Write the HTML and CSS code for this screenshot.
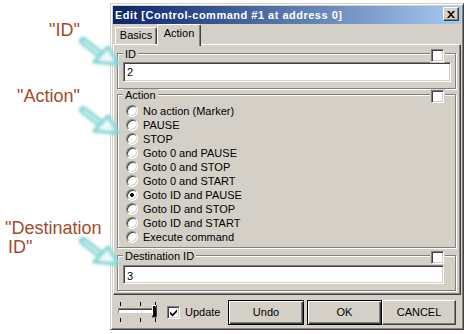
FILE: index.html
```html
<!DOCTYPE html>
<html lang="en">
<head>
  <meta charset="UTF-8">
  <meta name="viewport" content="width=device-width, initial-scale=1.0">
  <title>Edit [Control-command #1 at address 0]</title>
  <link rel="stylesheet" href="styles.css">
</head>
<body>
  <p class="note note-id">"ID"</p>
  <p class="note note-action">"Action"</p>
  <p class="note note-dest">"Destination<br><span class="indent">ID"</span></p>

  <div class="window">
    <div class="titlebar">
      <span class="title">Edit [Control-command #1 at address 0]</span>
      <button class="close" type="button" aria-label="Close">
        <svg width="8" height="7" viewBox="0 0 8 7"><path d="M0 0h2l2 2.3 2-2.3h2l-3 3.5 3 3.5h-2l-2-2.3-2 2.3h-2l3-3.5z" fill="#000"/></svg>
      </button>
    </div>

    <div class="tabs">
      <span class="tab tab-basics">Basics</span>
      <span class="tab active">Action</span>
    </div>

    <div class="panel">
      <div class="group group-id">
        <span class="legend">ID</span>
        <span class="check group-check"></span>
        <input class="field" type="text" value="2">
      </div>

      <div class="group group-action">
        <span class="legend">Action</span>
        <span class="check group-check"></span>
        <ul class="radios">
          <li><span class="radio"></span>No action (Marker)</li>
          <li><span class="radio"></span>PAUSE</li>
          <li><span class="radio"></span>STOP</li>
          <li><span class="radio"></span>Goto 0 and PAUSE</li>
          <li><span class="radio"></span>Goto 0 and STOP</li>
          <li><span class="radio"></span>Goto 0 and START</li>
          <li><span class="radio on"></span>Goto ID and PAUSE</li>
          <li><span class="radio"></span>Goto ID and STOP</li>
          <li><span class="radio"></span>Goto ID and START</li>
          <li><span class="radio"></span>Execute command</li>
        </ul>
      </div>

      <div class="group group-dest">
        <span class="legend">Destination ID</span>
        <span class="check group-check"></span>
        <input class="field" type="text" value="3">
      </div>
    </div>

    <div class="footer">
      <svg class="slider" width="40" height="24" viewBox="0 0 40 24">
        <path d="M2.5 2v4M22.5 2v4M37.5 2v4M2.5 18v4M22.5 18v4M37.5 18v4" stroke="#000"/>
        <rect x="0" y="8" width="37" height="5" fill="#fff"/>
        <path d="M0 8.5h37M0.5 8v5" stroke="#808080"/>
        <path d="M1 9.5h35" stroke="#404040"/>
        <rect x="34" y="5" width="5" height="12" fill="#d4d0c8"/>
        <path d="M34.5 16V5.5H38" stroke="#fff"/>
        <path d="M37.5 6v10H35" stroke="#808080"/>
        <path d="M38.5 5v12H34" stroke="#404040"/>
      </svg>
      <label class="update">
        <span class="check">
          <svg width="7" height="8" viewBox="0 0 7 8"><path d="M0 2.5L2.5 5L7 0.5V3L2.5 7.5L0 5Z" fill="#000"/></svg>
        </span>
        Update
      </label>
      <div class="buttons">
        <button class="btn btn-undo default" type="button">Undo</button>
        <button class="btn btn-ok default" type="button">OK</button>
        <button class="btn btn-cancel" type="button">CANCEL</button>
      </div>
    </div>
  </div>

  <!-- glowing pointers from the notes to the groups -->
  <svg class="arrows" width="130" height="334" viewBox="0 0 130 334">
    <defs>
      <filter id="glow" x="-30%" y="-30%" width="160%" height="160%">
        <feGaussianBlur stdDeviation="1.8"/>
      </filter>
      <g id="arrow">
        <path d="M83 41L100 54" stroke="#86d6d6" stroke-width="8" stroke-linecap="round" fill="none"/>
        <path d="M84 42L100 54" stroke="#d2f1f1" stroke-width="2.5" stroke-linecap="round" fill="none"/>
        <path d="M108 47L94 62L118 64Z" fill="#eef9f9" stroke="#86d6d6" stroke-width="3.5" stroke-linejoin="round"/>
      </g>
    </defs>
    <g filter="url(#glow)">
      <use href="#arrow"/>
      <use href="#arrow" y="69"/>
      <use href="#arrow" y="200"/>
    </g>
  </svg>
</body>
</html>
```

FILE: styles.css
```css
*, ::before, ::after {
  box-sizing: border-box;
}
body {
  position: relative;
  height: 334px;
  margin: 0;
  overflow: hidden;
  background: #fff;
  color: #000;
  font: 11px/13px "Liberation Sans", Arial, sans-serif;
}

/* notes on the left */
.note {
  position: absolute;
  margin: 0;
  color: #a34b2b;
  font-size: 18px;
  line-height: 19px;
  white-space: nowrap;
}
.note-id { left: 49px; top: 21px; }
.note-action { left: 17px; top: 87px; }
.note-dest { left: 5px; top: 219px; }
.indent { margin-left: 3px; }

.arrows {
  position: absolute;
  left: 0;
  top: 0;
  z-index: 2;
  pointer-events: none;
}

/* dialog window */
.window {
  display: flex;
  flex-direction: column;
  width: 354px;
  height: 327px;
  margin: 3px 0 0 110px;
  padding: 2px;
  background: #d4d0c8;
  border: 1px solid;
  border-color: #d4d0c8 #404040 #404040 #d4d0c8;
  box-shadow: inset 1px 1px #fff, inset -1px -1px #808080;
}
.titlebar {
  display: flex;
  flex: none;
  justify-content: space-between;
  align-items: flex-start;
  height: 18px;
  padding: 0 2px;
  background: linear-gradient(to right, #0a246a, #a6caf0);
}
.title {
  color: #fff;
  font-weight: bold;
  line-height: 18px;
  letter-spacing: .5px;
  white-space: nowrap;
}
.close {
  display: flex;
  align-items: center;
  justify-content: center;
  width: 16px;
  height: 14px;
  margin-top: 1px;
  padding: 0;
  background: #d4d0c8;
  border: 1px solid;
  border-color: #fff #404040 #404040 #fff;
  box-shadow: inset -1px -1px #808080;
}

/* tabs */
.tabs {
  display: flex;
  flex: none;
  align-items: flex-end;
  height: 20px;
  padding-left: 2px;
}
.tab {
  height: 17px;
  padding-top: 1px;
  text-align: center;
  border: 1px solid;
  border-bottom: 0;
  border-color: #fff #404040 #fff #fff;
  border-radius: 2px 2px 0 0;
  box-shadow: inset -1px 0 #808080;
}
.tab-basics { width: 42px; }
.tab.active {
  position: relative;
  z-index: 1;
  width: 44px;
  height: 22px;
  padding-top: 2px;
  margin-bottom: -2px;
  background: #d4d0c8;
}
.panel {
  flex: none;
  height: 251px;
  padding: 8px 4px 0 3px;
  border: 1px solid;
  border-color: #fff #404040 #404040 #fff;
  box-shadow: inset -1px -1px #808080;
}

/* group boxes */
.group {
  position: relative;
  border: 1px solid #808080;
  box-shadow: 1px 1px #fff, inset 1px 1px #fff;
}
.group-id {
  height: 36px;
  padding: 8px 0 0 5px;
  margin-bottom: 5px;
}
.group-action {
  height: 154px;
  padding: 9px 0 0 8px;
  margin-bottom: 7px;
}
.group-dest {
  height: 36px;
  padding: 9px 0 0 5px;
}
.legend {
  position: absolute;
  top: -6px;
  left: 5px;
  padding: 0 2px;
  background: #d4d0c8;
}
.check {
  display: flex;
  align-items: center;
  justify-content: center;
  flex: none;
  width: 13px;
  height: 13px;
  background: #fff;
  border: 1px solid;
  border-color: #808080 #fff #fff #808080;
  box-shadow: inset 1px 1px #404040, inset -1px -1px #d4d0c8;
}
.group-check {
  position: absolute;
  top: -5px;
  right: 11px;
  box-shadow: inset 1px 1px #404040, inset -1px -1px #d4d0c8, 0 0 0 1px #d4d0c8;
}
.field {
  display: block;
  width: 328px;
  height: 20px;
  padding: 0 3px;
  color: #000;
  font: inherit;
  background: #fff;
  border: 1px solid;
  border-color: #808080 #fff #fff #808080;
  box-shadow: inset 1px 1px #404040, inset -1px -1px #d4d0c8;
  outline: none;
}
.group-dest .field {
  width: 321px;
  height: 19px;
  padding-top: 2px;
}

/* radio list */
.radios {
  margin: 0;
  padding: 0;
  list-style: none;
}
.radios li {
  display: flex;
  align-items: center;
  gap: 5px;
  height: 14px;
  line-height: 14px;
}
.radio {
  flex: none;
  width: 12px;
  height: 12px;
  background: #fff;
  border: 1px solid;
  border-color: #808080 #fff #fff #808080;
  border-radius: 50%;
  box-shadow: inset 1px 1px #404040, inset -1px -1px #d4d0c8;
}
.radio.on {
  background: radial-gradient(circle, #000 1.6px, #fff 2.2px);
}

/* bottom bar */
.footer {
  display: flex;
  flex: 1;
  align-items: flex-start;
  padding: 5px 5px 0;
}
.slider {
  display: block;
  flex: none;
}
.update {
  display: flex;
  align-items: center;
  gap: 5px;
  margin: 6px 0 0 9px;
}
.buttons {
  display: flex;
  margin-left: auto;
}
.btn {
  height: 25px;
  padding: 0;
  color: #000;
  font: inherit;
  background: #d4d0c8;
  border: 1px solid;
  border-color: #fff #404040 #404040 #fff;
  box-shadow: inset -1px -1px #808080;
}
.btn.default {
  border-color: #000;
  box-shadow: inset 1px 1px #fff, inset -1px -1px #404040, inset -2px -2px #808080;
}
.btn-undo { width: 76px; margin-right: 3px; }
.btn-ok { width: 75px; }
.btn-cancel { width: 74px; }
```
